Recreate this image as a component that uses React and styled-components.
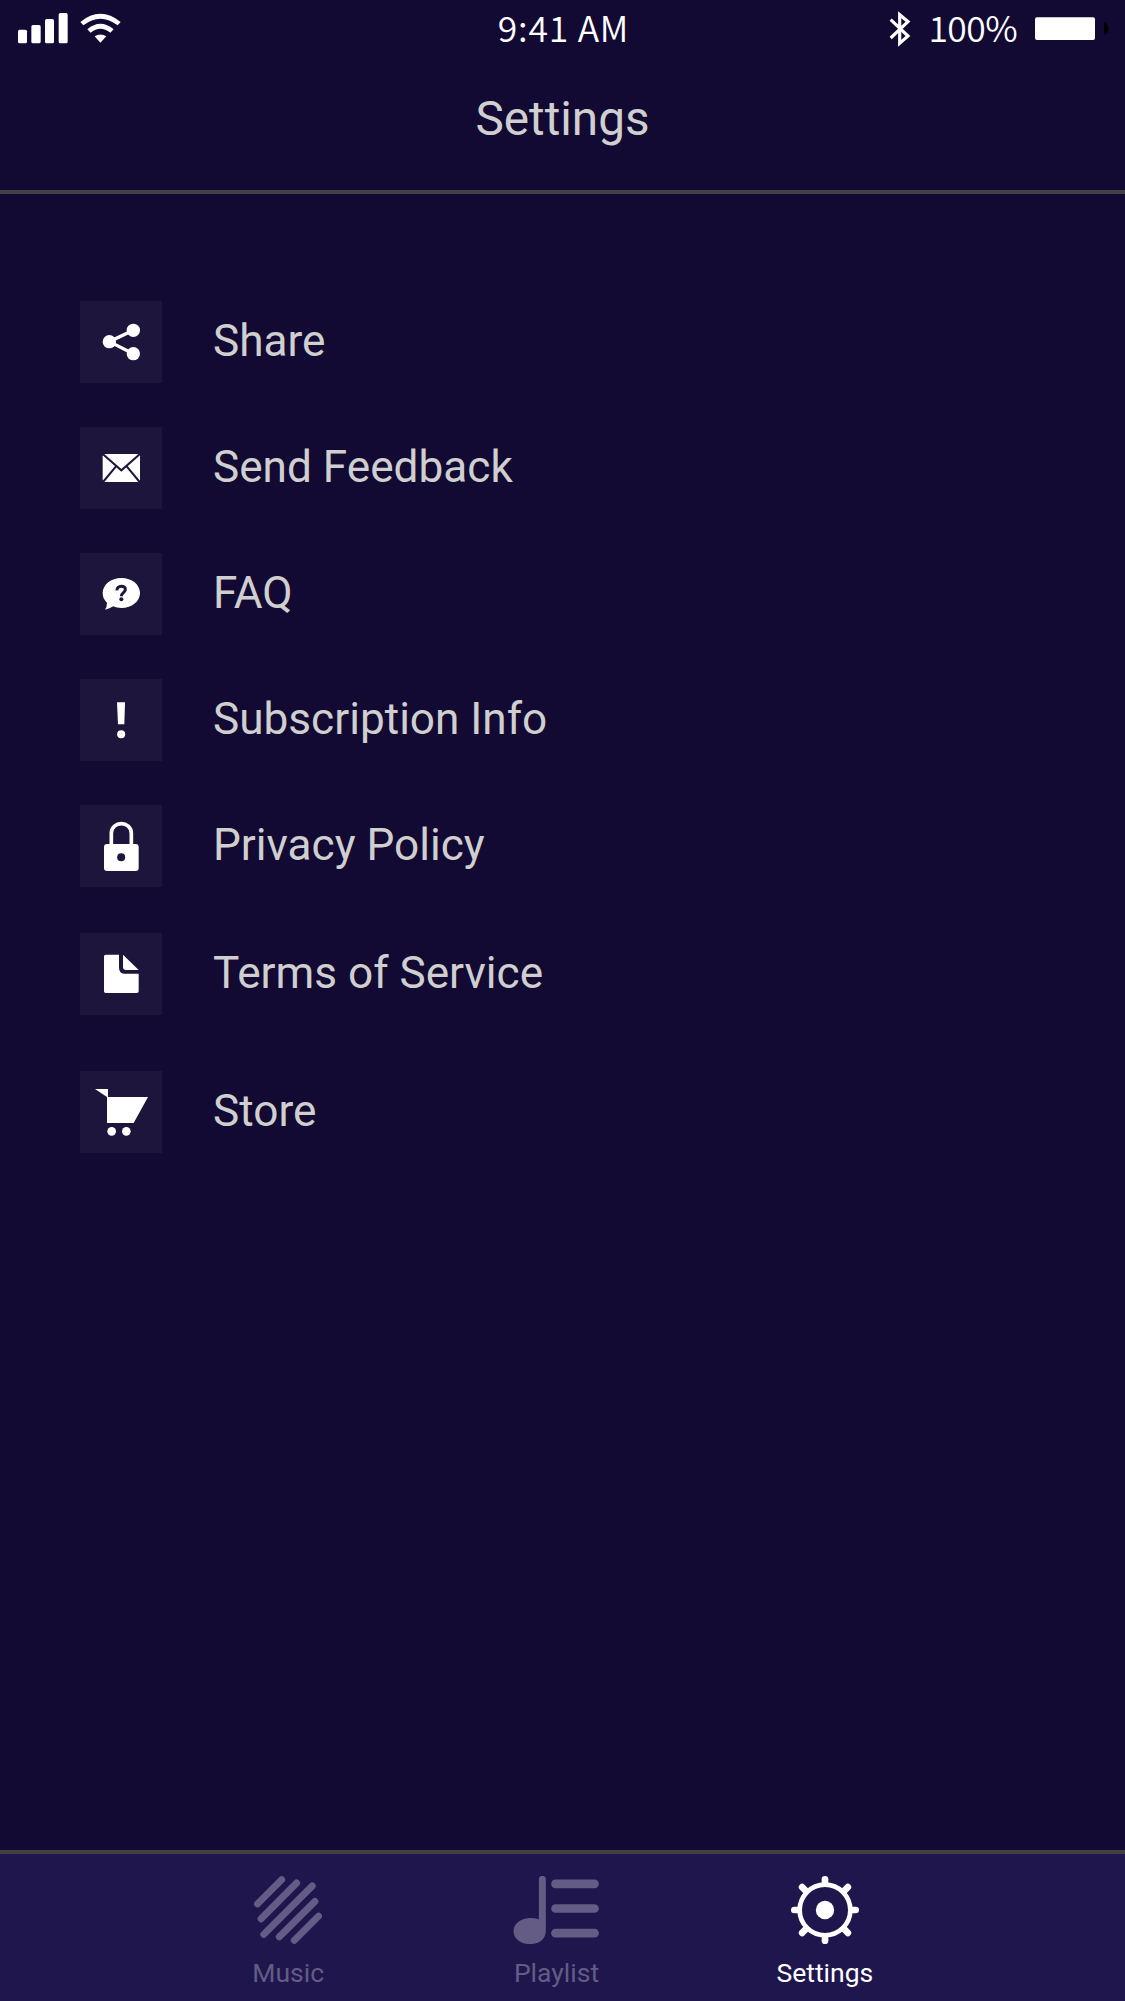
import React from "react";
import styled, { createGlobalStyle } from "styled-components";

const GlobalStyle = createGlobalStyle`
  * { box-sizing: border-box; }
  html, body { margin: 0; padding: 0; background: #130a33; }
  svg { display: block; flex: none; }
`;

const Screen = styled.div`
  width: 1125px;
  height: 2001px;
  display: flex;
  flex-direction: column;
  overflow: hidden;
  background: #130a33;
  color: #cfcfcf;
  font-family: Roboto, "Liberation Sans", sans-serif;
`;

const StatusBar = styled.div`
  height: 58px;
  padding: 0 16px 0 18px;
  display: grid;
  grid-template-columns: 1fr auto 1fr;
  align-items: center;
  color: #fff;
`;

const StatusGroup = styled.div`
  height: 58px;
  display: flex;
  align-items: center;
  justify-content: ${(p) => (p.$end ? "flex-end" : "flex-start")};
`;

const StatusText = styled.span`
  font-family: "Noto Sans CJK JP", "Noto Sans", sans-serif;
  font-weight: 350;
  font-size: 35.5px;
  line-height: 54px;
  padding-bottom: 4px;
  white-space: nowrap;
  letter-spacing: ${(p) => p.$tracking || 0}px;
  margin-right: ${(p) => p.$gap || 0}px;
`;

const Header = styled.header`
  height: 136px;
  padding-top: 26px;
  border-bottom: 4px solid #424045;
`;

const Title = styled.h1`
  margin: 0;
  text-align: center;
  font-size: 47.7px;
  font-weight: 400;
  line-height: 70px;
`;

const Menu = styled.ul`
  flex: 1;
  margin: 0;
  padding: 107px 80px 0;
  list-style: none;
`;

const Item = styled.li`
  display: flex;
  align-items: center;
  height: 82px;
  margin-bottom: ${(p) => p.$gap}px;
`;

const Tile = styled.div`
  width: 82px;
  height: 82px;
  margin-right: 51px;
  background: #1d153b;
`;

const Label = styled.span`
  font-size: 44.15px;
  line-height: 80px;
  padding-bottom: 2px;
  white-space: nowrap;
`;

const TabBar = styled.nav`
  height: 151px;
  padding: 22px 166px 0 154px;
  display: grid;
  grid-template-columns: repeat(3, 1fr);
  border-top: 4px solid #424045;
  background: #1f164d;
`;

const Tab = styled.div`
  display: flex;
  flex-direction: column;
  align-items: center;
  color: ${(p) => (p.$active ? "#fff" : "#645c84")};
`;

const TabLabel = styled.span`
  margin-top: 13px;
  font-size: 26.5px;
  line-height: 32px;
`;

const BluetoothSvg = styled.svg`
  margin-right: 17.5px;
  overflow: visible;
`;

const SignalSvg = styled.svg`
  margin-bottom: 1px;
`;

const Signal = () => (
  <SignalSvg width="103" height="30.33" viewBox="54 40 309 91" fill="#fff">
    <rect x="54" y="90" width="27" height="41" rx="5" />
    <rect x="94" y="76" width="28" height="55" rx="5" />
    <rect x="135" y="58" width="27" height="73" rx="5" />
    <rect x="176" y="40" width="27" height="91" rx="5" />
    <path d="M241 67Q301 18 362 67L353 77Q301 37 250 77Z" />
    <path d="M262 89Q301 56 341 89L331 99Q301 75 272 99Z" />
    <path d="M284 110Q301 99 319 110L301 129Z" />
  </SignalSvg>
);

const Bluetooth = () => (
  <BluetoothSvg width="22" height="36" viewBox="72 32 66 108">
    <path d="M77 58L129 107L104 129V43L129 64L77 113" fill="none" stroke="#fff" strokeWidth="9.5" />
  </BluetoothSvg>
);

const Battery = () => (
  <svg width="74" height="24" viewBox="510 53 222 72">
    <rect x="510" y="54" width="180" height="68" rx="6" fill="#fff" />
    <path d="M717 68Q730 74 730 88T717 107Z" fill="#000" />
  </svg>
);

const ShareIcon = () => (
  <svg width="82" height="82" viewBox="30 33 246 246" fill="#fff">
    <path d="M190 121L118 155L190 191" fill="none" stroke="#fff" strokeWidth="10" />
    <circle cx="190" cy="121" r="20" />
    <circle cx="118" cy="155" r="20" />
    <circle cx="190" cy="191" r="20" />
  </svg>
);

const MailIcon = () => (
  <svg width="82" height="82" viewBox="30 411 246 246">
    <rect x="98" y="492" width="112" height="84" rx="7" fill="#fff" />
    <path d="M99 493L154 541L209 493M99 576L138 529M209 576L170 529" fill="none" stroke="#1d153b" strokeWidth="6" />
  </svg>
);

const FaqIcon = () => (
  <svg width="82" height="82" viewBox="30 39 246 246">
    <path d="M154 114C186 114 210 134 210 159C210 184 186 204 154 204C145 204 137 202 130 199Q119 206 105 209Q111 200 111 188C102 180 98 170 98 159C98 134 123 114 154 114Z" fill="#fff" />
    <path d="M141 151C139 135 168 135 166 149C165 158 154 158 154 169" fill="none" stroke="#1d153b" strokeWidth="9" />
    <circle cx="154" cy="178" r="6" fill="#1d153b" />
  </svg>
);

const InfoIcon = () => (
  <svg width="82" height="82" viewBox="30 416 246 246" fill="#fff">
    <path d="M141 486H165L163 552H144Z" />
    <circle cx="153.500" cy="581.500" r="12" />
  </svg>
);

const LockIcon = () => (
  <svg width="82" height="82" viewBox="30 45 246 246">
    <path d="M124 166V130C124 91 184 91 184 130V166" fill="none" stroke="#fff" strokeWidth="11" />
    <rect x="102" y="162" width="104" height="81" rx="9" fill="#fff" />
    <circle cx="153.500" cy="202" r="12" fill="#1d153b" />
  </svg>
);

const FileIcon = () => (
  <svg width="82" height="82" viewBox="30 429 246 246" fill="#fff">
    <path d="M107 494H147V533Q147 551 165 551H206V604Q206 609 201 609H107Q102 609 102 604V499Q102 494 107 494Z" />
    <path d="M159 494L206 540H168Q159 540 159 531Z" />
  </svg>
);

const CartIcon = () => (
  <svg width="82" height="82" viewBox="30 63 246 246" fill="#fff">
    <path d="M75 117H114V141H234L191 219H111V141Z" />
    <circle cx="125" cy="244" r="13" />
    <circle cx="169" cy="244" r="13" />
  </svg>
);

const MusicIcon = () => (
  <svg width="68" height="68" viewBox="72 107 204 205">
    <path
      d="M82 191L155 118M93 236L200 128M101 283L247 137M148 290L255 184M193 301L266 228"
      fill="none"
      stroke="currentColor"
      strokeWidth="21"
      strokeLinecap="round"
    />
  </svg>
);

const PlaylistIcon = () => (
  <svg width="86" height="68" viewBox="69.500 107.500 258 204" fill="currentColor">
    <path d="M147 237V117Q147 107 157.500 107T168 117V273C168 296 147 312 120 312C93 312 71 295 71 273C71 244 106 225 147 237Z" />
    <rect x="184" y="118" width="143" height="26" rx="13" />
    <rect x="184" y="192" width="143" height="26" rx="13" />
    <rect x="184" y="266" width="143" height="26" rx="13" />
  </svg>
);

const GearIcon = () => (
  <svg width="68" height="68" viewBox="123 107.500 204 204" fill="none" stroke="currentColor">
    <circle cx="225" cy="209.500" r="76" strokeWidth="14" />
    <circle cx="225" cy="209.500" r="27.500" fill="currentColor" stroke="none" />
    <g strokeWidth="20" strokeLinecap="round">
      {[0, 45, 90, 135, 180, 225, 270, 315].map((a) => (
        <path key={a} d={a % 90 ? "M225 129V112.500" : "M225 129V117.500"} transform={`rotate(${a} 225 209.500)`} />
      ))}
    </g>
  </svg>
);

const items = [
  { label: "Share", Icon: ShareIcon, gap: 44 },
  { label: "Send Feedback", Icon: MailIcon, gap: 44 },
  { label: "FAQ", Icon: FaqIcon, gap: 44 },
  { label: "Subscription Info", Icon: InfoIcon, gap: 44 },
  { label: "Privacy Policy", Icon: LockIcon, gap: 46 },
  { label: "Terms of Service", Icon: FileIcon, gap: 56 },
  { label: "Store", Icon: CartIcon, gap: 0 },
];

const tabs = [
  { label: "Music", Icon: MusicIcon },
  { label: "Playlist", Icon: PlaylistIcon },
  { label: "Settings", Icon: GearIcon, active: true },
];

export default function App() {
  return (
    <Screen>
      <GlobalStyle />
      <StatusBar>
        <StatusGroup>
          <Signal />
        </StatusGroup>
        <StatusText $tracking={0.8}>9:41 AM</StatusText>
        <StatusGroup $end>
          <Bluetooth />
          <StatusText $gap={18} $tracking={-0.6}>100%</StatusText>
          <Battery />
        </StatusGroup>
      </StatusBar>
      <Header>
        <Title>Settings</Title>
      </Header>
      <Menu>
        {items.map(({ label, Icon, gap }) => (
          <Item key={label} $gap={gap}>
            <Tile>
              <Icon />
            </Tile>
            <Label>{label}</Label>
          </Item>
        ))}
      </Menu>
      <TabBar>
        {tabs.map(({ label, Icon, active }) => (
          <Tab key={label} $active={active}>
            <Icon />
            <TabLabel>{label}</TabLabel>
          </Tab>
        ))}
      </TabBar>
    </Screen>
  );
}
